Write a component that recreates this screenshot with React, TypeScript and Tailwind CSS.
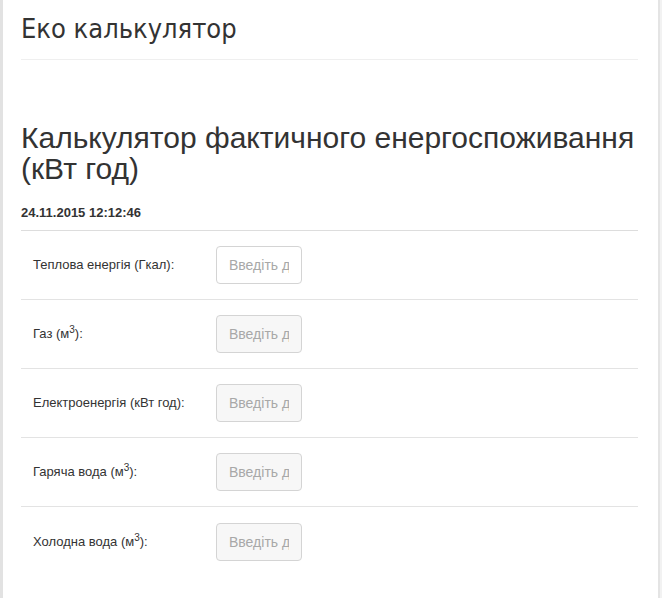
const rows: { label: React.ReactNode; bg: string }[] = [
  { label: "Теплова енергія (Гкал):", bg: "bg-white" },
  { label: <>Газ (м<sup className="text-[10px]">3</sup>):</>, bg: "bg-[#f7f7f7]" },
  { label: "Електроенергія (кВт год):", bg: "bg-[#f7f7f7]" },
  { label: <>Гаряча вода (м<sup className="text-[10px]">3</sup>):</>, bg: "bg-[#f7f7f7]" },
  { label: <>Холодна вода (м<sup className="text-[10px]">3</sup>):</>, bg: "bg-[#f7f7f7]" },
];

export default function App() {
  return (
    <div className="w-[662px] h-[598px] overflow-hidden bg-white flex font-['Liberation_Sans',Arial,sans-serif] text-[#333]">
      <div className="w-[3px] bg-[#e2e2e2]" />
      <div className="flex-1 pl-[18px] pr-[20px]">
        <h1 className="pt-[13px] pb-[14px] text-[27px] leading-[32px] font-['Liberation_Sans_Narrow','DejaVu_Sans_Condensed',sans-serif] border-b border-[#efefef]">
          Еко калькулятор
        </h1>
        <h2 className="mt-[62px] text-[30px] leading-[31px]">
          Калькулятор фактичного енергоспоживання (кВт год)
        </h2>
        <div className="mt-[21px] pb-[9px] text-[13px] leading-[16px] font-bold border-b border-[#dddddd]">
          24.11.2015 12:12:46
        </div>
        {rows.map((r, i) => (
          <div
            key={i}
            className={`flex items-center h-[69px] ${i < rows.length - 1 ? "border-b border-[#e3e3e3]" : ""}`}
          >
            <div className="w-[195px] pl-[12px] text-[13px] leading-[18px]">{r.label}</div>
            <input
              type="text"
              placeholder="Введіть дані"
              className={`w-[86px] h-[38px] px-[12px] text-[14px] rounded-[4px] border border-[#d4d4d4] ${r.bg} placeholder-[#a8a8a8] outline-none`}
            />
          </div>
        ))}
      </div>
      <div className="w-[2px] bg-[#e4e4e4]" />
      <div className="w-[2px] bg-[#f2f2f2]" />
    </div>
  );
}
